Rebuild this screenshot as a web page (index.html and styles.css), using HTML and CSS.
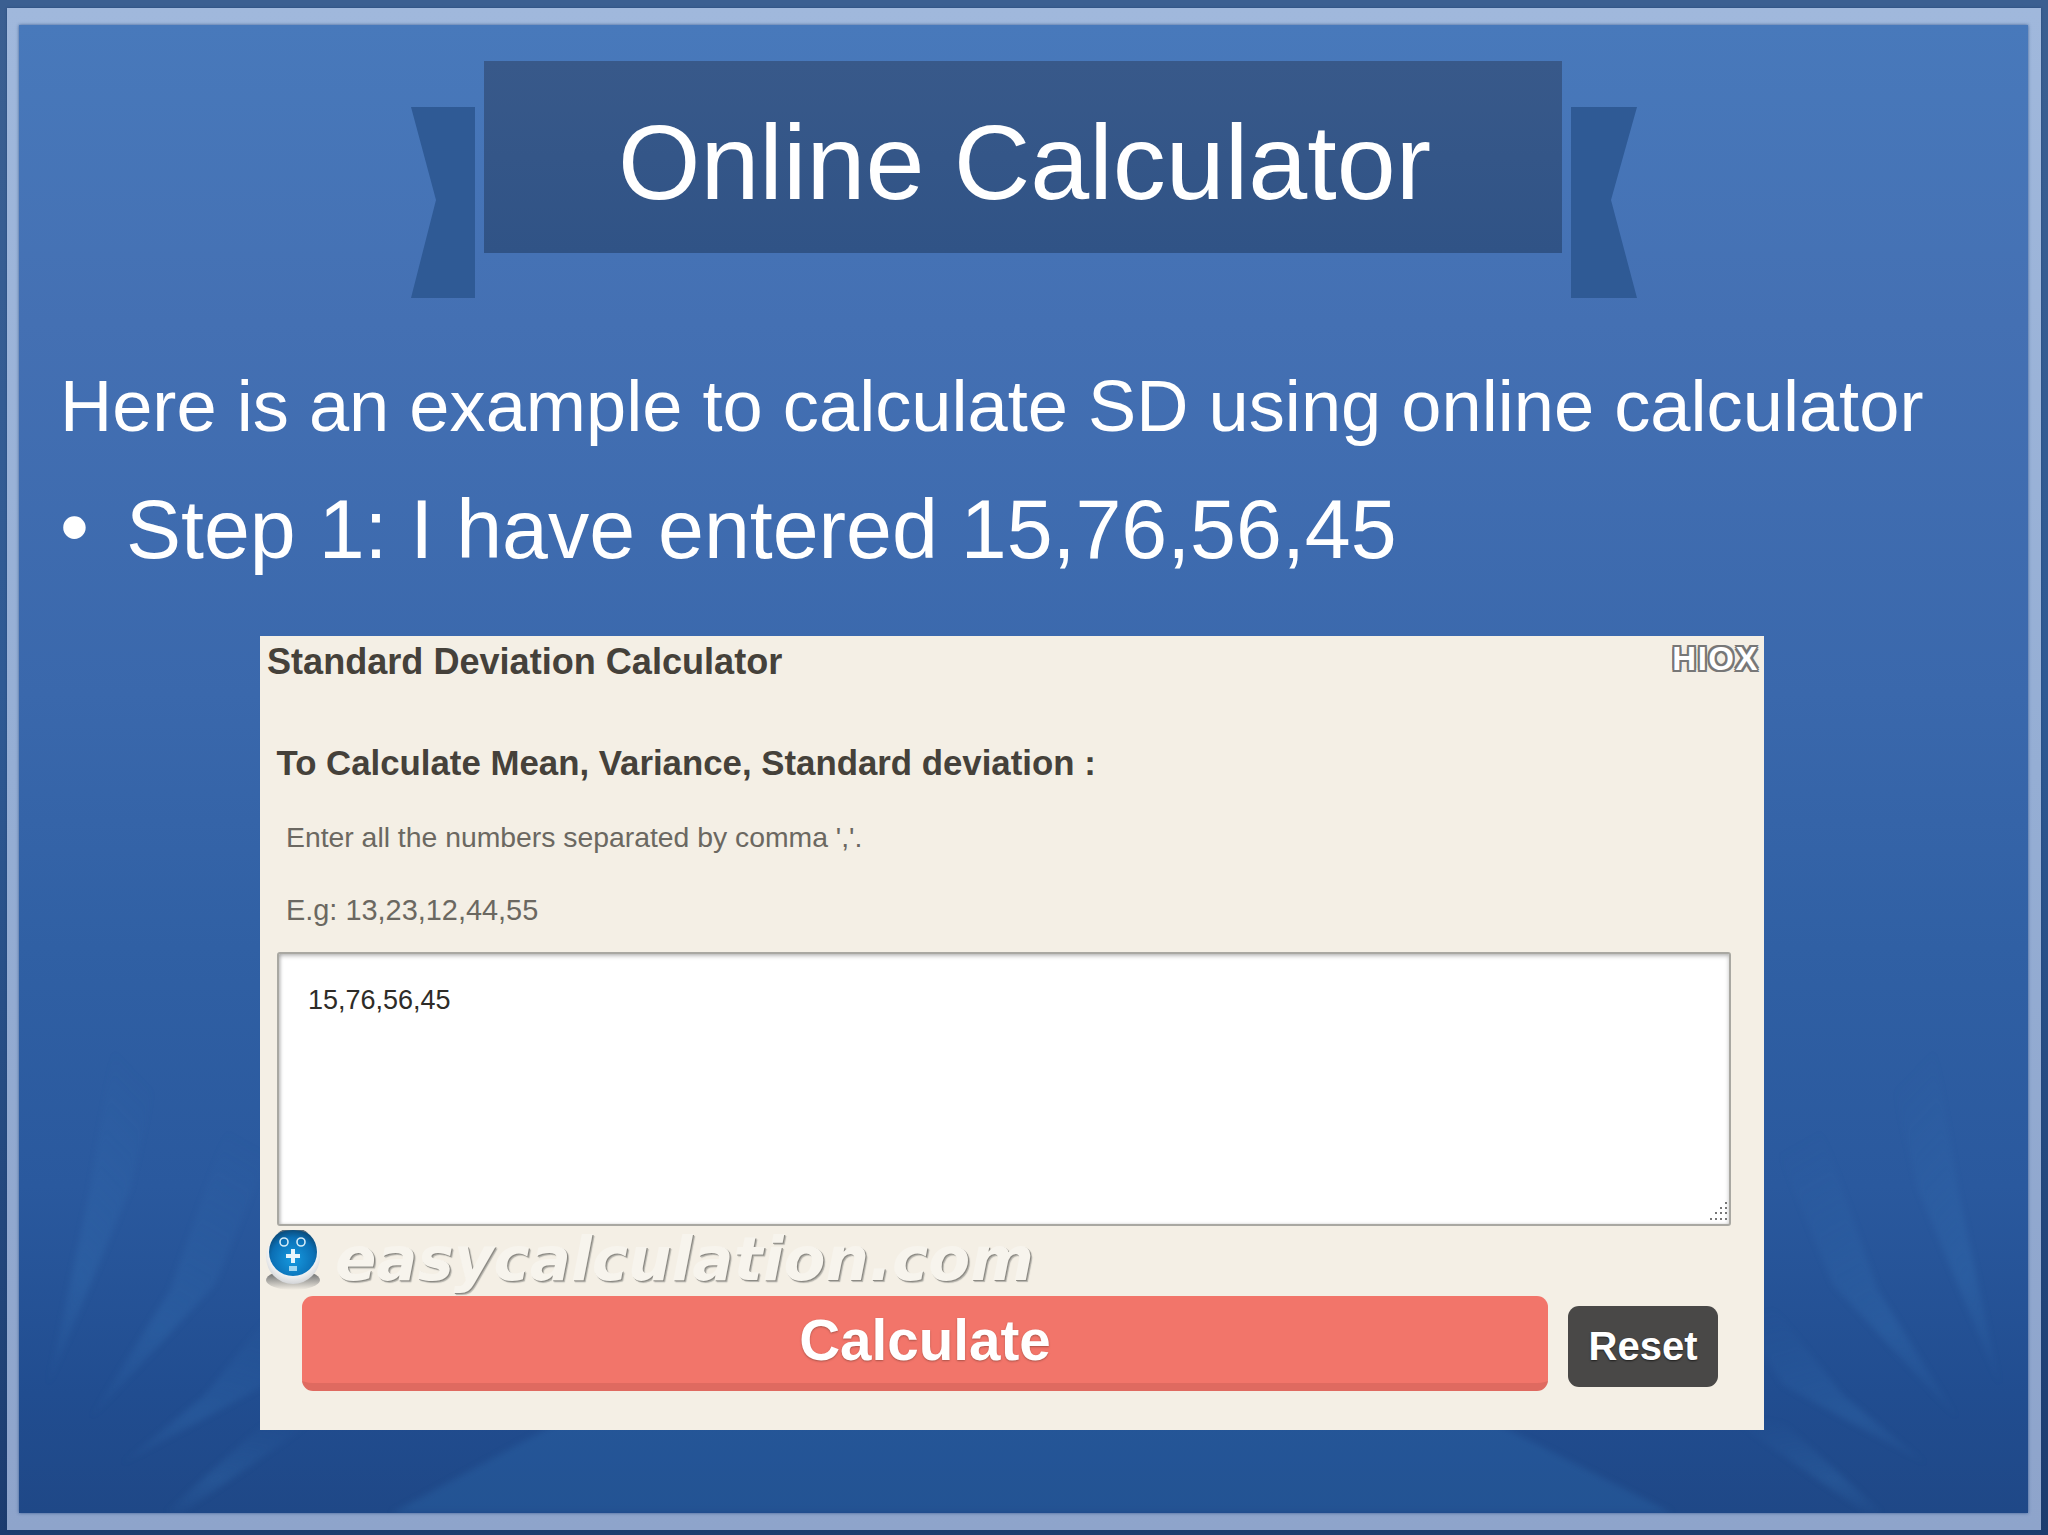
FILE: index.html
```html
<!DOCTYPE html>
<html lang="en">
<head>
<meta charset="utf-8">
<title>Online Calculator</title>
<link rel="stylesheet" href="styles.css">
</head>
<body>
<main class="slide">
  <div class="frame">
    <div class="panel">
      <svg class="rays" viewBox="19 25 2009 1488" preserveAspectRatio="none" aria-hidden="true">
        <defs>
          <linearGradient id="rayFill" x1="0" y1="1" x2="0.35" y2="0">
            <stop offset="0" stop-color="#3f83c4" stop-opacity="0.04"/>
            <stop offset="0.35" stop-color="#3f83c4" stop-opacity="0.2"/>
            <stop offset="1" stop-color="#3f83c4" stop-opacity="0"/>
          </linearGradient>
          <g id="rayset">
            <polygon fill="url(#rayFill)" points="48,1386 90,1190 115,1040 170,1020 130,1190"/>
            <polygon fill="url(#rayFill)" points="90,1419 170,1290 230,1120 295,1090 215,1285"/>
            <polygon fill="url(#rayFill)" points="120,1465 205,1395 280,1300 330,1280 265,1385"/>
            <polygon fill="url(#rayFill)" points="165,1513 262,1425 345,1400 182,1513"/>
          </g>
        </defs>
        <use href="#rayset"/>
        <use href="#rayset" transform="translate(2048 0) scale(-1 1)"/>
        <polygon class="ray-center" points="392,1513 600,1400 1450,1400 1672,1513"/>
      </svg>

      <header class="banner-row">
        <svg class="ribbon" viewBox="0 0 64 191" aria-hidden="true"><polygon points="0,0 64,0 64,191 0,191 25,93"/></svg>
        <h1 class="banner">Online Calculator</h1>
        <svg class="ribbon ribbon-right" viewBox="0 0 66 191" aria-hidden="true"><polygon points="0,0 66,0 40,93 66,191 0,191"/></svg>
      </header>

      <p class="lead">Here is an example to calculate SD using online calculator</p>
      <ul class="steps">
        <li class="step"><span class="bullet">•</span><span>Step 1: I have entered 15,76,56,45</span></li>
      </ul>

      <section class="card">
        <div class="card-top">
          <h2 class="card-title">Standard Deviation Calculator</h2>
          <span class="hiox">HIOX</span>
        </div>
        <h3 class="card-heading">To Calculate Mean, Variance, Standard deviation :</h3>
        <p class="hint hint-first">Enter all the numbers separated by comma ','.</p>
        <p class="hint hint-second">E.g: 13,23,12,44,55</p>
        <div class="input-box">
          <span class="input-value">15,76,56,45</span>
          <svg class="resizer" viewBox="0 0 24 24" aria-hidden="true">
            <g fill="#777">
              <rect x="20" y="2" width="2" height="2"/>
              <rect x="15" y="7" width="2" height="2"/><rect x="20" y="7" width="2" height="2"/>
              <rect x="10" y="12" width="2" height="2"/><rect x="15" y="12" width="2" height="2"/><rect x="20" y="12" width="2" height="2"/>
              <rect x="5" y="18" width="2" height="2"/><rect x="10" y="18" width="2" height="2"/><rect x="15" y="18" width="2" height="2"/><rect x="20" y="18" width="2" height="2"/>
            </g>
          </svg>
        </div>
        <div class="brand">
          <svg class="globe" viewBox="0 0 56 60" aria-hidden="true">
            <defs>
              <radialGradient id="eggFill" cx="0.5" cy="0.4" r="0.65">
                <stop offset="0.6" stop-color="#ffffff"/>
                <stop offset="1" stop-color="#c9cbce"/>
              </radialGradient>
              <radialGradient id="ballFill" cx="0.5" cy="0.65" r="0.6">
                <stop offset="0" stop-color="#169ae0"/>
                <stop offset="0.75" stop-color="#0b6fb5"/>
                <stop offset="1" stop-color="#0b4f80"/>
              </radialGradient>
              <linearGradient id="groundFill" x1="0" y1="0" x2="0" y2="1">
                <stop offset="0" stop-color="#55585b"/>
                <stop offset="1" stop-color="#55585b" stop-opacity="0"/>
              </linearGradient>
            </defs>
            <ellipse cx="28" cy="50" rx="27" ry="10" fill="url(#groundFill)"/>
            <ellipse cx="28" cy="27" rx="27" ry="27" fill="url(#eggFill)"/>
            <circle cx="28" cy="22" r="24" fill="url(#ballFill)"/>
            <path d="M13 3 A24 24 0 0 1 43 3 A30 20 0 0 0 13 3Z" fill="#5a6b78"/>
            <g fill="none" stroke="#d5ecf8" stroke-width="1.6">
              <circle cx="19" cy="12" r="4"/>
              <circle cx="36" cy="12" r="4"/>
            </g>
            <path d="M26 19h4v5h5v4h-5v5h-4v-5h-5v-4h5z" fill="#e7f5fc"/>
            <rect x="24" y="36" width="8" height="5" fill="#9fd6f2"/>
          </svg>
          <span class="brand-name">easycalculation.com</span>
        </div>
        <div class="actions">
          <div class="btn btn-calc">Calculate</div>
          <div class="btn btn-reset">Reset</div>
        </div>
      </section>
    </div>
  </div>
</main>
</body>
</html>
```
FILE: styles.css
```css
* { box-sizing: border-box; }
html, body { margin: 0; padding: 0; }
body {
  width: 2048px;
  height: 1535px;
  overflow: hidden;
  font-family: "Liberation Sans", Arial, sans-serif;
}
.slide {
  width: 2048px;
  height: 1535px;
  padding: 8px 7px 5px 7px;
  background: linear-gradient(180deg, #3b5f91 0%, #2f5a94 45%, #1c3c6f 100%);
}
.frame {
  width: 100%;
  height: 100%;
  padding: 17px 13px 17px 12px;
  background: linear-gradient(180deg, #a0b8dc 0%, #95aed4 50%, #8ea4cb 100%);
  box-shadow: 0 0 2px rgba(30, 60, 110, .7);
}
.panel {
  position: relative;
  width: 100%;
  height: 100%;
  padding: 36px 0 0 42px;
  overflow: hidden;
  color: #fff;
  background: linear-gradient(180deg, #4879bb 0%, #4470b3 20%, #3a68ac 45%, #3060a4 62%, #2a599e 78%, #214d90 92%, #1f4887 100%);
  box-shadow: 0 0 3px rgba(50, 85, 140, .9);
}
.rays {
  position: absolute;
  inset: 0;
  width: 100%;
  height: 100%;
  filter: blur(3px);
}
.ray-center { fill: #2f6cae; opacity: .3; }

.banner-row {
  position: relative;
  display: flex;
  gap: 9px;
  margin-left: 350px;
  width: 1227px;
  height: 237px;
}
.ribbon {
  flex: none;
  width: 64px;
  height: 191px;
  margin-top: 46px;
  fill: #2f5a95;
}
.ribbon-right { width: 66px; }
.banner {
  flex: none;
  width: 1078px;
  height: 192px;
  margin: 0;
  padding: 12px 0 0 3px;
  text-align: center;
  font-size: 106px;
  font-weight: 400;
  line-height: 178px;
  color: #fff;
  background: linear-gradient(180deg, #38598a 0%, #305386 100%);
}
.lead {
  position: relative;
  margin: 66px 0 0 -1px;
  font-size: 72.25px;
  line-height: 84px;
  white-space: nowrap;
}
.steps {
  position: relative;
  margin: 33px 0 0;
  padding: 0;
  list-style: none;
}
.step {
  display: flex;
  font-size: 82.5px;
  line-height: 96px;
  white-space: nowrap;
}
.bullet { width: 65px; flex: none; margin: -3px 0 0 -1px; padding-right: 1px; box-sizing: content-box; }

.card {
  position: relative;
  width: 1504px;
  margin: 59px 0 0 199px;
  padding: 6px 0 39px;
  color: #45413a;
  background: #f4efe5;
}
.card-top {
  display: flex;
  justify-content: space-between;
  padding: 0 5px 0 7px;
}
.card-title {
  margin: 0;
  font-size: 36.1px;
  font-weight: 700;
  line-height: 40px;
}
.hiox {
  margin-top: 2px;
  font-size: 33px;
  font-weight: 700;
  line-height: 29px;
  letter-spacing: 1.5px;
  color: #fff;
  text-shadow: -2px 0 0 #777, 2px 0 0 #777, 0 -2px 0 #777, 0 2px 0 #777, -2px -2px 0 #777, 2px 2px 0 #777, -2px 2px 0 #777, 2px -2px 0 #777;
}
.card-heading {
  margin: 61px 0 0 16.5px;
  font-size: 34.8px;
  font-weight: 700;
  line-height: 40px;
}
.hint {
  margin: 0 0 0 26px;
  line-height: 32px;
  color: #6b6861;
}
.hint-first { margin-top: 38px; font-size: 28.35px; }
.hint-second { margin-top: 41px; font-size: 28.9px; }
.input-box {
  position: relative;
  width: 1454px;
  height: 274px;
  margin: 26px 0 0 17px;
  padding: 30px 29px;
  background: #fff;
  border: 2px solid #a9a8a2;
  border-radius: 3px;
  box-shadow: inset 0 2px 4px rgba(0, 0, 0, .25), inset 2px 0 3px rgba(0, 0, 0, .12);
  color: #2e2c28;
  font-size: 27px;
  line-height: 32px;
}
.resizer {
  position: absolute;
  right: 0;
  bottom: 0;
  width: 24px;
  height: 24px;
}
.brand {
  display: flex;
  gap: 14px;
  height: 70px;
  padding: 4px 0 0 5px;
}
.globe { flex: none; width: 56px; height: 60px; }
.brand-name {
  font-family: "DejaVu Sans", sans-serif;
  font-size: 61px;
  font-weight: 700;
  font-style: italic;
  line-height: 62px;
  margin-top: -2px;
  color: #f7f4ed;
  text-shadow: 1px 1px 0 #8c8a84, 2px 2px 1px #b3b1aa;
}
.actions {
  display: flex;
  align-items: flex-start;
  gap: 20px;
  margin-left: 42px;
}
.btn {
  color: #fff;
  font-weight: 700;
  text-align: center;
}
.btn-calc {
  width: 1246px;
  height: 95px;
  font-size: 56.6px;
  line-height: 89px;
  border-radius: 11px;
  background: #f2756a;
  border-bottom: 8px solid #df6a60;
  text-shadow: 0 1px 2px rgba(120, 60, 50, .6);
}
.btn-reset {
  width: 150px;
  height: 81px;
  margin-top: 10px;
  font-size: 40px;
  line-height: 80px;
  border-radius: 11px;
  background: #494847;
  text-shadow: 0 1px 2px rgba(0, 0, 0, .6);
}
```
